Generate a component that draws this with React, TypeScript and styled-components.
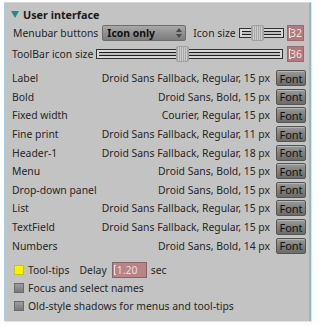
import React from "react";
import styled, { createGlobalStyle } from "styled-components";

const Global = createGlobalStyle`
  html, body { margin: 0; padding: 0; background: #fdfdfd; }
  body { font-family: "Noto Sans", "DejaVu Sans", sans-serif; font-size: 10.4px; color: #262626; }
`;

const Page = styled.div`
  padding: 2px 8px 7px 4px;
  width: 319px;
  box-sizing: border-box;
`;

const Panel = styled.div`
  background: #c3c3c3;
  border-left: 1px solid #a9cde0;
  border-right: 2px solid #8fb7cc;
  border-top: 1px solid #d8d8d8;
  box-shadow: 1px 1px 0 #e2e2e2;
  padding: 3px 3px 6px 7px;
  display: flex;
  flex-direction: column;
`;

const Header = styled.div`
  display: flex;
  align-items: center;
  gap: 4px;
  font-weight: bold;
  height: 16px;
  font-size: 10.8px;
  color: #1a1a1a;
  margin-left: -1px;
`;

const Row = styled.div<{ $h?: number }>`
  display: flex;
  align-items: center;
  height: ${(p) => p.$h ?? 20}px;
  white-space: nowrap;
`;

const Label = styled.span<{ $ml?: number }>`
  margin-left: ${(p) => p.$ml ?? 0}px;
`;

const Select = styled.div`
  margin-left: 4px;
  width: 84px;
  height: 16px;
  box-sizing: border-box;
  border: 1px solid #6d6d6d;
  border-radius: 2px;
  background: linear-gradient(#a9a9a9, #8c8c8c 60%, #7d7d7d);
  display: flex;
  align-items: center;
  justify-content: space-between;
  padding: 0 3px 0 4px;
  font-weight: bold;
  color: #111;
`;

const Arrows = styled.svg`
  width: 6px;
  height: 10px;
`;

const SliderTrack = styled.div<{ $w: number }>`
  position: relative;
  width: ${(p) => p.$w}px;
  height: 10px;
  box-sizing: border-box;
  border: 1px solid #333;
  background: #d6d6d6;
  display: flex;
  align-items: center;
  padding: 0 2px;
`;

const TrackLine = styled.div`
  flex: 1;
  height: 2px;
  border-top: 1px solid #1e1e1e;
  border-bottom: 1px solid #1e1e1e;
  background: #bdbdbd;
`;

const Thumb = styled.div<{ $left: number }>`
  position: absolute;
  top: -4px;
  left: ${(p) => p.$left}px;
  width: 13px;
  height: 16px;
  border-radius: 2px;
  background: repeating-linear-gradient(90deg, #a8a8a8 0 1px, #cbcbcb 1px 2px);
  border: 1px solid #a0a0a0;
  box-sizing: border-box;
`;

const NumBox = styled.div`
  margin-left: auto;
  margin-right: 2px;
  width: 17px;
  height: 16px;
  background: #b07b7e;
  color: #f6dede;
  border: 1px solid #9a6a6d;
  box-sizing: border-box;
  display: flex;
  align-items: center;
  padding-left: 2px;
  position: relative;
`;

const Caret = styled.span`
  position: absolute;
  left: 1px;
  top: 2px;
  width: 2px;
  height: 10px;
  border-left: 1px solid #f6dede;
  border-top: 1px solid #f6dede;
  border-bottom: 1px solid #f6dede;
  box-sizing: border-box;
`;

const FontRow = styled.div`
  display: flex;
  align-items: center;
  height: 18.6px;
  white-space: nowrap;
`;

const FontName = styled.span`
  flex: 1;
`;

const FontValue = styled.span`
  margin-right: 6px;
`;

const FontButton = styled.div`
  width: 30px;
  height: 16px;
  box-sizing: border-box;
  border: 1px solid #555;
  border-radius: 2px;
  background: linear-gradient(#9a9a9a, #7c7c7c 55%, #6c6c6c);
  color: #111;
  font-size: 11px;
  display: flex;
  align-items: center;
  justify-content: center;
  box-shadow: inset 0 1px 0 #b5b5b5;
`;

const Check = styled.div<{ $on?: boolean }>`
  width: 10px;
  height: 10px;
  margin: 0 4px 0 2px;
  box-sizing: border-box;
  border: 1px solid ${(p) => (p.$on ? "#c8c800" : "#6a6a6a")};
  background: ${(p) => (p.$on ? "#f4f400" : "linear-gradient(#9c9c9c, #7a7a7a)")};
`;

const DelayInput = styled.div`
  position: relative;
  margin: 0 4px 0 5px;
  width: 35px;
  height: 16px;
  box-sizing: border-box;
  background: #b58588;
  border: 1px solid #8b6366;
  color: #f3dcdc;
  display: flex;
  align-items: center;
  padding-left: 4px;
`;

const Gap = styled.div<{ $h: number }>`
  height: ${(p) => p.$h}px;
`;

const fonts: [string, string][] = [
  ["Label", "Droid Sans Fallback, Regular, 15 px"],
  ["Bold", "Droid Sans, Bold, 15 px"],
  ["Fixed width", "Courier, Regular, 15 px"],
  ["Fine print", "Droid Sans Fallback, Regular, 11 px"],
  ["Header-1", "Droid Sans Fallback, Regular, 18 px"],
  ["Menu", "Droid Sans, Bold, 15 px"],
  ["Drop-down panel", "Droid Sans, Bold, 15 px"],
  ["List", "Droid Sans Fallback, Regular, 15 px"],
  ["TextField", "Droid Sans Fallback, Regular, 15 px"],
  ["Numbers", "Droid Sans, Bold, 14 px"],
];

export default function App() {
  return (
    <>
      <Global />
      <Page>
        <Panel>
          <Header>
            <svg width="8" height="9" viewBox="0 0 8 9">
              <path d="M0 1 L8 1 L4 8 Z" fill="#1f8c8c" />
            </svg>
            User interface
          </Header>
          <Row $h={21}>
            <Label $ml={1}>Menubar buttons</Label>
            <Select>
              Icon only
              <Arrows viewBox="0 0 6 10">
                <path d="M3 0 L6 4 L0 4 Z M0 6 L6 6 L3 10 Z" fill="#4a4a4a" />
              </Arrows>
            </Select>
            <Label $ml={7}>Icon size</Label>
            <SliderTrack $w={45} style={{ marginLeft: 3 }}>
              <TrackLine />
              <Thumb $left={11} />
            </SliderTrack>
            <NumBox>
              <Caret />
              32
            </NumBox>
          </Row>
          <Row $h={21}>
            <Label>ToolBar icon size</Label>
            <SliderTrack $w={187} style={{ marginLeft: 3 }}>
              <TrackLine />
              <Thumb $left={79} />
            </SliderTrack>
            <NumBox>
              <Caret />
              36
            </NumBox>
          </Row>
          <Gap $h={5} />
          {fonts.map(([n, v]) => (
            <FontRow key={n}>
              <FontName>{n}</FontName>
              <FontValue>{v}</FontValue>
              <FontButton>Font</FontButton>
            </FontRow>
          ))}
          <Gap $h={6} />
          <Row $h={18}>
            <Check $on />
            <span>Tool-tips</span>
            <Label $ml={10}>Delay</Label>
            <DelayInput>
              <Caret />
              1.20
            </DelayInput>
            <span>sec</span>
          </Row>
          <Row $h={18}>
            <Check />
            <span>Focus and select names</span>
          </Row>
          <Row $h={18}>
            <Check />
            <span>Old-style shadows for menus and tool-tips</span>
          </Row>
        </Panel>
      </Page>
    </>
  );
}
